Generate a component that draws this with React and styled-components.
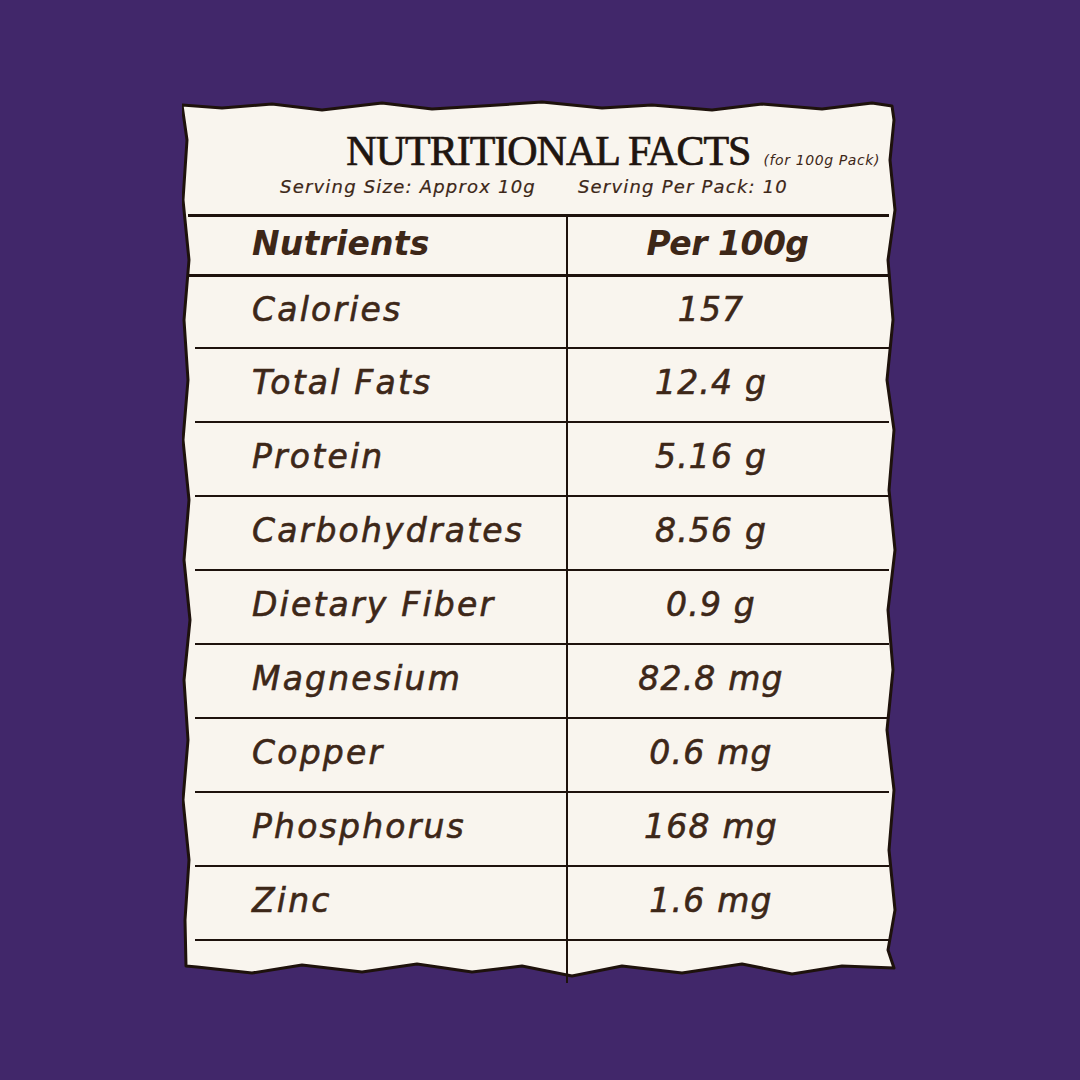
import React from "react";
import styled, { createGlobalStyle } from "styled-components";

const Global = createGlobalStyle`
  html, body { margin: 0; padding: 0; }
  body { background: #41276a; }
`;

const Page = styled.div`
  width: 1080px;
  height: 1080px;
  background: #41276a;
  display: flex;
  align-items: center;
  justify-content: center;
`;

const Card = styled.div`
  position: relative;
  width: 716px;
  height: 880px;
  display: flex;
  flex-direction: column;
`;

const Paper = styled.svg`
  position: absolute;
  inset: 0;
  width: 100%;
  height: 100%;
  z-index: 0;
`;

const Content = styled.div`
  position: relative;
  z-index: 1;
  display: flex;
  flex-direction: column;
  padding-top: 30px;
`;

const TitleRow = styled.div`
  display: flex;
  justify-content: flex-end;
  align-items: baseline;
  gap: 13px;
  padding-right: 18px;
`;

const Title = styled.h1`
  margin: 0;
  font-family: "Liberation Serif", "DejaVu Serif", serif;
  font-weight: 400;
  font-size: 42px;
  letter-spacing: -1px;
  color: #1f1510;
  -webkit-text-stroke: 0.7px #1f1510;
  line-height: 1;
`;

const Small = styled.span`
  font-family: "DejaVu Sans", "Noto Sans", sans-serif;
  font-style: italic;
  font-size: 14px;
  letter-spacing: 0.6px;
  color: #3d2718;
`;

const Serving = styled.div`
  display: flex;
  justify-content: center;
  gap: 42px;
  margin-top: 4px;
  margin-bottom: 17px;
  padding-right: 12px;
  font-family: "DejaVu Sans", "Noto Sans", sans-serif;
  font-style: italic;
  font-size: 18px;
  letter-spacing: 1.2px;
  color: #3d2718;
  -webkit-text-stroke: 0.2px #3d2718;
`;

const Table = styled.div`
  margin-left: 6px;
  width: 701px;
  border-top: 3px solid #1e120c;
`;

const Row = styled.div`
  display: grid;
  grid-template-columns: ${(p) => p.$left}px 1fr;
  margin-left: ${(p) => p.$inset}px;
  height: ${(p) => p.$h}px;
  border-bottom: ${(p) => p.$line}px solid #1e120c;
  box-sizing: border-box;
`;

const Cell = styled.div`
  display: flex;
  align-items: center;
  justify-content: ${(p) => (p.$center ? "center" : "flex-start")};
  padding-left: ${(p) => p.$pl || 0}px;
  padding-right: ${(p) => p.$pr || 0}px;
  padding-bottom: 5px;
  border-right: ${(p) => (p.$divider ? "2px solid #1e120c" : "none")};
  font-family: "DejaVu Sans", "Noto Sans", sans-serif;
  font-style: italic;
  font-weight: ${(p) => (p.$bold ? 700 : 400)};
  font-size: 33px;
  letter-spacing: ${(p) => p.$ls}px;
  color: #3d2718;
  -webkit-text-stroke: ${(p) => (p.$bold ? 0 : 0.6)}px #3d2718;
`;

const rows = [
  ["Calories", "157"],
  ["Total Fats", "12.4 g"],
  ["Protein", "5.16 g"],
  ["Carbohydrates", "8.56 g"],
  ["Dietary Fiber", "0.9 g"],
  ["Magnesium", "82.8 mg"],
  ["Copper", "0.6 mg"],
  ["Phosphorus", "168 mg"],
  ["Zinc", "1.6 mg"],
];

const edge =
  "M0,5 L40,8 90,4 140,10 200,3 250,9 300,6 360,2 420,8 470,5 530,10 580,4 640,9 690,3 710,6 " +
  "L712,20 708,60 713,110 706,160 711,220 705,280 712,330 707,390 713,450 706,510 711,570 705,630 712,690 707,750 713,810 706,850 712,868 " +
  "L660,866 610,874 560,864 500,873 440,866 390,876 340,866 290,872 235,864 180,872 120,865 70,873 15,867 4,866 " +
  "L3,820 7,760 1,700 6,640 2,580 8,520 2,460 7,400 1,340 6,280 2,220 7,160 1,100 5,40 Z";

export default function App() {
  return (
    <>
      <Global />
      <Page>
        <Card>
          <Paper viewBox="0 0 716 880" preserveAspectRatio="none">
            <path d={edge} fill="#f9f5ee" stroke="#1e120c" strokeWidth="3" strokeLinejoin="round" />
          </Paper>
          <Content>
            <TitleRow>
              <Title>NUTRITIONAL FACTS</Title>
              <Small>(for 100g Pack)</Small>
            </TitleRow>
            <Serving>
              <span>Serving Size: Approx 10g</span>
              <span>Serving Per Pack: 10</span>
            </Serving>
            <Table>
              <Row $left={380} $inset={0} $h={60} $line={3}>
                <Cell $divider $bold $ls={0.2} $pl={64}>Nutrients</Cell>
                <Cell $center $bold $ls={-0.5} $pr={2}>Per 100g</Cell>
              </Row>
              {rows.map(([name, value], i) => (
                <Row key={name} $left={373} $inset={7} $h={i === 0 ? 72 : 74} $line={2}>
                  <Cell $divider $ls={2.2} $pl={57}>{name}</Cell>
                  <Cell $center $ls={1.2} $pr={35}>{value}</Cell>
                </Row>
              ))}
              <Row $left={373} $inset={7} $h={42} $line={0}>
                <Cell $divider />
                <Cell />
              </Row>
            </Table>
          </Content>
        </Card>
      </Page>
    </>
  );
}
